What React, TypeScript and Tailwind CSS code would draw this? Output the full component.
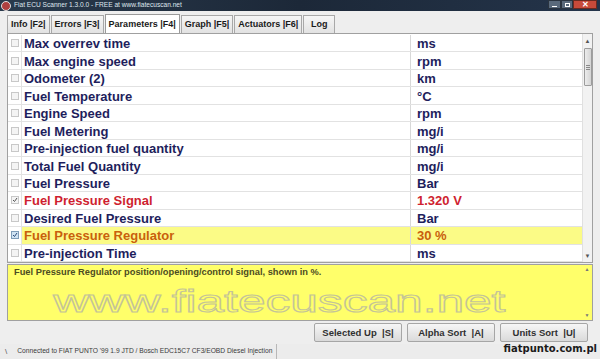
import React from "react";

type Row = { label: string; unit: string; checked?: boolean; kind?: "red" | "hi" };

const rows: Row[] = [
  { label: "Max overrev time", unit: "ms" },
  { label: "Max engine speed", unit: "rpm" },
  { label: "Odometer (2)", unit: "km" },
  { label: "Fuel Temperature", unit: "°C" },
  { label: "Engine Speed", unit: "rpm" },
  { label: "Fuel Metering", unit: "mg/i" },
  { label: "Pre-injection fuel quantity", unit: "mg/i" },
  { label: "Total Fuel Quantity", unit: "mg/i" },
  { label: "Fuel Pressure", unit: "Bar" },
  { label: "Fuel Pressure Signal", unit: "1.320 V", checked: true, kind: "red" },
  { label: "Desired Fuel Pressure", unit: "Bar" },
  { label: "Fuel Pressure Regulator", unit: "30 %", checked: true, kind: "hi" },
  { label: "Pre-injection Time", unit: "ms" },
];

const tabs = ["Info |F2|", "Errors |F3|", "Parameters |F4|", "Graph |F5|", "Actuators |F6|", "Log"];

function Check({ checked, blue }: { checked?: boolean; blue?: boolean }) {
  return (
    <div
      className={
        "w-[8px] h-[8px] border flex items-center justify-center " +
        (blue ? "border-[#7f9db9] bg-[#cfe3f3]" : "border-[#c8c8c8] bg-[#f4f4f4]")
      }
    >
      {checked && (
        <svg width="6" height="6" viewBox="0 0 6 6">
          <path d="M1 3 L2.5 4.5 L5 1" stroke={blue ? "#2a4a7a" : "#555"} strokeWidth="1" fill="none" />
        </svg>
      )}
    </div>
  );
}

export default function App() {
  return (
    <div
      className="relative w-[600px] h-[359px] overflow-hidden bg-[#eeeeee] flex flex-col"
      style={{ fontFamily: '"Liberation Sans", Arial, sans-serif' }}
    >
      {/* Title bar */}
      <div className="h-[11px] bg-gradient-to-r from-[#2a3a4c] via-[#1c2838] to-[#24344a] flex items-center relative">
        <div className="w-[10px] h-[10px] ml-[1px] rounded-full bg-[#b04040] border border-[#e0e0e0]" />
        <span className="ml-[3px] text-[6.6px] leading-none text-[#dfe6ee]">
          Fiat ECU Scanner 1.3.0.0 - FREE at www.fiatecuscan.net
        </span>
        <div className="ml-auto flex h-[9px] self-start">
          <div className="w-[13px] h-[9px] bg-[#5a6a7c] border border-[#2a3440] flex items-end justify-center pb-[1px]">
            <div className="w-[5px] h-[1px] bg-white" />
          </div>
          <div className="w-[12px] h-[9px] bg-[#5a6a7c] border border-[#2a3440] flex items-center justify-center">
            <div className="w-[5px] h-[4px] border border-white" />
          </div>
          <div className="w-[24px] h-[9px] mr-[3px] bg-[#c74a3a] border border-[#6a2a20] flex items-center justify-center text-white text-[8px] font-bold leading-none">
            ✕
          </div>
        </div>
      </div>

      {/* Tabs */}
      <div className="h-[22px] flex items-end pl-[7px]">
        {tabs.map((t) => {
          const active = t.startsWith("Parameters");
          return (
            <div
              key={t}
              className={
                "px-[3px] mr-[1px] flex items-center justify-center border border-b-0 text-[9px] font-bold leading-none text-[#1a1a1a] " +
                (t === "Log" ? "min-w-[32px] " : "") +
                (active
                  ? "bg-white border-[#9a9a9a] h-[19px]"
                  : "h-[18px] bg-gradient-to-b from-[#f6f6f6] to-[#e2e2e2] border-[#a8a8a8]")
              }
            >
              {t}
            </div>
          );
        })}
      </div>

      {/* Table */}
      <div className="mx-[7px] h-[230px] border border-[#a0a0a0] bg-white flex">
        <div className="flex-1 flex flex-col pt-[1px]">
          {rows.map((r) => {
            const color =
              r.kind === "red" ? "text-[#cf1f30]" : r.kind === "hi" ? "text-[#c9600c]" : "text-[#1e1e5c]";
            return (
              <div
                key={r.label}
                className={
                  "h-[17.5px] flex border-b border-[#e2e2e2] " + (r.kind === "hi" ? "bg-[#fbfb86]" : "")
                }
              >
                <div className="w-[14px] flex items-center justify-center bg-white border-r border-[#e2e2e2]">
                  <Check checked={r.checked} blue={r.kind === "hi"} />
                </div>
                <div
                  className={
                    "w-[389px] pl-[2px] pt-[1px] flex items-center border-r border-[#d8d8d8] text-[13px] font-bold leading-none " +
                    color
                  }
                >
                  {r.label}
                </div>
                <div className={"flex-1 pl-[6px] pt-[1px] flex items-center text-[13px] font-bold leading-none " + color}>
                  {r.unit}
                </div>
              </div>
            );
          })}
        </div>
        {/* Scrollbar */}
        <div className="w-[10px] bg-[#f2f2f2] border-l border-[#e0e0e0] flex flex-col items-center">
          <div className="h-[14px] flex items-center justify-center text-[6px] text-[#555] leading-none">▲</div>
          <div className="w-[8px] h-[38px] bg-gradient-to-r from-[#ececec] to-[#d4d4d4] border border-[#9c9c9c] rounded-[1px] flex items-center justify-center">
            <div className="w-[4px] flex flex-col gap-[1px]">
              <div className="h-[1px] bg-[#888]" />
              <div className="h-[1px] bg-[#888]" />
              <div className="h-[1px] bg-[#888]" />
            </div>
          </div>
          <div className="flex-1" />
          <div className="h-[12px] flex items-center justify-center text-[6px] text-[#555] leading-none">▼</div>
        </div>
      </div>

      {/* Description */}
      <div className="mx-[7px] mt-[1px] h-[57px] border border-[#a0a0a0] bg-[#ffff6a] flex">
        <div className="flex-1 pl-[6px] pt-[3px] text-[9.3px] font-bold leading-none text-[#4c4c22]">
          Fuel Pressure Regulator position/opening/control signal, shown in %.
        </div>
        <div className="w-[10px] flex flex-col items-center justify-between py-[2px] text-[5px] text-[#777] leading-none">
          <span>▲</span>
          <span>▼</span>
        </div>
      </div>

      {/* Buttons */}
      <div className="h-[23px] flex items-center justify-end gap-[5px] pr-[12px]">
        {["Selected Up  |S|", "Alpha Sort  |A|", "Units Sort  |U|"].map((b) => (
          <div
            key={b}
            className="w-[88px] h-[19px] border border-[#a6a6a6] rounded-[2px] bg-gradient-to-b from-[#f6f6f6] to-[#dadada] flex items-center justify-center text-[9.5px] font-bold text-[#303030] leading-none whitespace-pre"
          >
            {b}
          </div>
        ))}
      </div>

      {/* Status bar */}
      <div className="flex-1 flex items-center bg-[#ececec]">
        <div className="w-[277px] h-full flex items-center border-r border-[#b8b8b8]">
          <span className="ml-[5px] text-[8px] text-[#555] leading-none">\</span>
          <span className="ml-[10px] text-[6.7px] text-[#3a3a3a] leading-none whitespace-nowrap">
            Connected to FIAT PUNTO '99 1.9 JTD / Bosch EDC15C7 CF3/EOBD Diesel Injection
          </span>
        </div>
        <div
          className="ml-auto mr-[3px] mb-[5px] text-[10px] font-bold text-[#1a1a1a] leading-none"
          style={{ fontFamily: '"DejaVu Sans", sans-serif' }}
        >
          fiatpunto.com.pl
        </div>
      </div>

      {/* Watermark */}
      <div className="absolute left-[54px] top-[286px] w-[450px] flex justify-center pointer-events-none">
        <span className="inline-block scale-x-[1.6] text-[31px] leading-none text-transparent [-webkit-text-stroke:1px_#c4c498]">
          www.fiatecuscan.net
        </span>
      </div>
    </div>
  );
}
